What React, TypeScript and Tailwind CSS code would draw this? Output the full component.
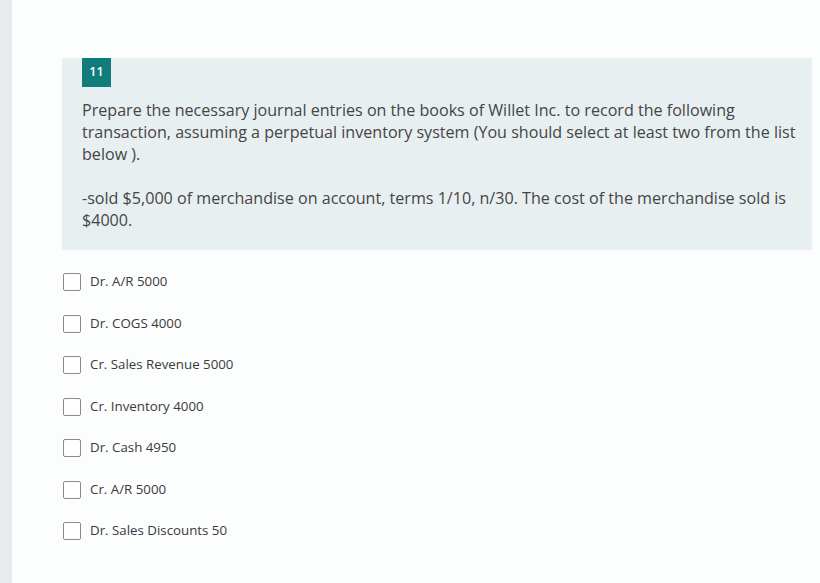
import React from "react";

const options = [
  "Dr. A/R 5000",
  "Dr. COGS 4000",
  "Cr. Sales Revenue 5000",
  "Cr. Inventory 4000",
  "Dr. Cash 4950",
  "Cr. A/R 5000",
  "Dr. Sales Discounts 50",
];

export default function App() {
  return (
    <div
      className="flex w-[820px] h-[583px] overflow-hidden bg-[#fcfdfd]"
      style={{ fontFamily: '"Open Sans", "Noto Sans", sans-serif' }}
    >
      <div className="w-[12px] shrink-0 bg-[#e6ecee]" />
      <div className="flex-1 pt-[58px] pl-[50px] pr-[8px]">
        <div className="bg-[#e8eff1] pl-[20px] pr-[10px] pb-[19px]">
          <div className="w-[29px] h-[29px] bg-[#107c7c] text-white text-[12.5px] font-semibold flex items-center justify-center">
            11
          </div>
          <p className="mt-[12px] text-[16.1px] leading-[22px] text-[#454545] whitespace-nowrap">
            Prepare the necessary journal entries on the books of Willet Inc. to record the following
            <br />
            transaction, assuming a perpetual inventory system (You should select at least two from the list
            <br />
            below ).
          </p>
          <p className="mt-[22px] text-[16.1px] leading-[22px] text-[#454545] whitespace-nowrap">
            -sold $5,000 of merchandise on account, terms 1/10, n/30. The cost of the merchandise sold is
            <br />
            $4000.
          </p>
        </div>
        <div className="flex flex-col pt-[23px] pl-[1px] gap-[23.5px]">
          {options.map((o) => (
            <div key={o} className="flex items-center h-[18px]">
              <div className="w-[18px] h-[18px] border border-[#8a8a8a] rounded-[2px] bg-white shrink-0" />
              <span className="ml-[9px] text-[13.3px] text-[#3a3a3a]">{o}</span>
            </div>
          ))}
        </div>
      </div>
    </div>
  );
}
